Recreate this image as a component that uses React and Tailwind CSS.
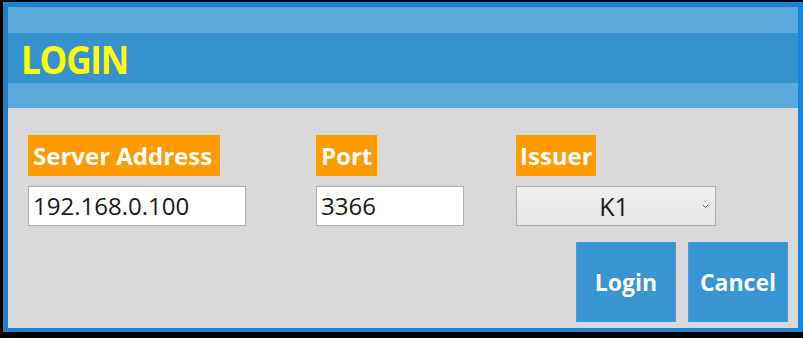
export default function App() {
  const font = { fontFamily: '"Open Sans", "Noto Sans", sans-serif' };
  return (
    <div className="w-[803px] h-[338px] bg-black pl-[3px] pt-[2px] pb-[6px]" style={font}>
      <div className="h-full flex flex-col border-[#1983d5] border-l-[5px] border-t-[5px] border-r-[5px] border-b-[4px] bg-[#d9d9d9]">
        <div className="h-[26px] bg-[#5da9dd]" />
        <div className="h-[50px] bg-[#3592cf] flex items-center pl-[13px]">
          <span className="inline-block text-[35px] font-bold text-[#ffff00] tracking-[-1.2px] leading-none scale-y-[1.12] origin-center">LOGIN</span>
        </div>
        <div className="h-[25px] bg-[#5da9dd]" />
        <div className="flex-1 flex flex-col pl-[20px] pr-[10px] pt-[27px]">
          <div className="flex">
            <div className="w-[288px] flex flex-col gap-[10px]">
              <div className="self-start h-[41px] w-[192px] bg-[#fe9b00] text-white font-bold text-[24px] leading-none flex items-center pl-[5px]">Server Address</div>
              <div className="h-[40px] w-[218px] bg-white border border-[#acacac] text-[24px] text-[#1a1a1a] flex items-center pl-[4px] leading-none">192.168.0.100</div>
            </div>
            <div className="w-[200px] flex flex-col gap-[10px]">
              <div className="self-start h-[41px] w-[61px] bg-[#fe9b00] text-white font-bold text-[24px] leading-none flex items-center pl-[5px]">Port</div>
              <div className="h-[40px] w-[148px] bg-white border border-[#acacac] text-[24px] text-[#1a1a1a] flex items-center pl-[4px] leading-none">3366</div>
            </div>
            <div className="flex flex-col gap-[10px]">
              <div className="self-start h-[41px] w-[80px] bg-[#fe9b00] text-white font-bold text-[24px] leading-none flex items-center pl-[4px]">Issuer</div>
              <div className="relative h-[40px] w-[200px] bg-gradient-to-b from-[#f0f0f0] to-[#e5e5e5] border border-[#acacac] text-[25px] text-[#1a1a1a] flex items-center justify-center leading-none">
                <span className="pr-[4px]">K1</span>
                <svg className="absolute right-[6px] top-[17px]" width="7" height="5" viewBox="0 0 7 5">
                  <path d="M1 1 L3.5 3.5 L6 1" fill="none" stroke="#555" strokeWidth="1" />
                </svg>
              </div>
            </div>
          </div>
          <div className="flex justify-end gap-[12px] mt-[16px]">
            <button className="w-[100px] h-[80px] bg-[#3895d2] border border-[#2ea3f2] text-white font-bold text-[23px]">Login</button>
            <button className="w-[100px] h-[80px] bg-[#3895d2] border border-[#2ea3f2] text-white font-bold text-[23px]">Cancel</button>
          </div>
        </div>
      </div>
    </div>
  );
}
